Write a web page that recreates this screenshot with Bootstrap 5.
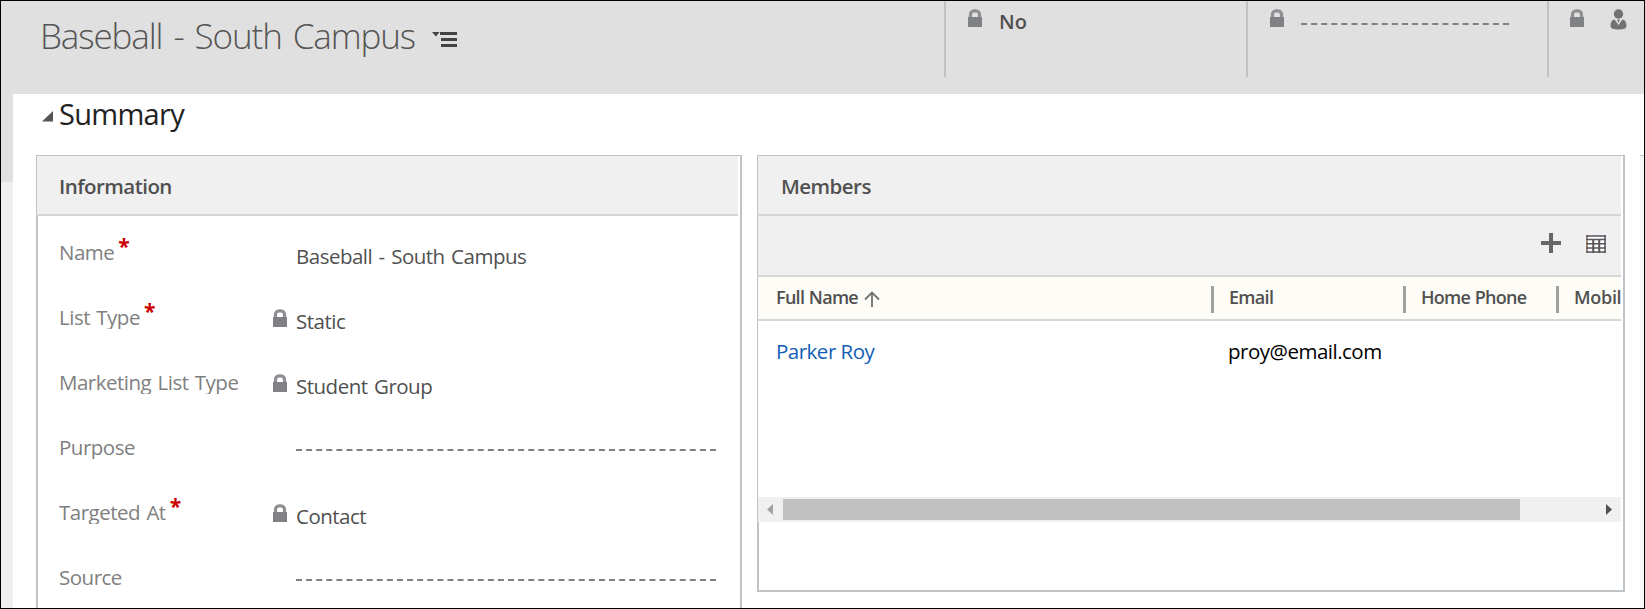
<!DOCTYPE html>
<html lang="en">
<head>
<meta charset="utf-8">
<meta name="viewport" content="width=device-width, initial-scale=1">
<title>Baseball - South Campus</title>
<link href="https://cdn.jsdelivr.net/npm/bootstrap@5.3.0/dist/css/bootstrap.min.css" rel="stylesheet">
<style>
  body { font-family: "Open Sans", "Noto Sans", sans-serif; color: #505050; background: #fff; }
  svg { display: block; flex: none; }
  .app-frame { height: 609px; border: 1px solid #000; }
  .record-bar { height: 93px; background: #e0e0e0; flex: none; }
  .record-title { font-size: 35px; font-weight: 300; line-height: 48px; padding: 11px 0 0 39px; width: 431px; margin: 0; color: #555; letter-spacing: -1.1px; word-spacing: 3px; }
  .menu-icon { margin-top: 31px; }
  .head-cell { width: 302px; height: 76px; border-left: 2px solid #bdc3c7; padding: 8px 0 0 22px; }
  .head-cell.mid { width: 301px; }
  .head-cell.last { width: 97px; padding-left: 21px; }
  .head-value { font-size: 20px; line-height: 26px; font-weight: 600; margin-left: 17px; }
  .dashes { border-top: 2px dashed #808080; height: 0; }
  .side-rail { width: 12px; background: #f0f0f0; }
  .side-rail div { height: 88px; background: #e0e0e0; }
  .section-head { height: 61px; padding-left: 29px; }
  .section-head h2 { font-size: 29px; line-height: 40px; margin: 0 0 0 6px; font-weight: 400; color: #222; letter-spacing: -.7px; }
  .panels { padding-left: 23px; gap: 15px; }
  .panel { border: 0 solid #bdc3c7; border-right-width: 2px; border-top: 1px solid #bdc3c7; background: #fff; }
  .panel-title { height: 60px; margin-right: 2px; padding: 2px 0 0 22px; border-left: 1px solid #bdc3c7; border-bottom: 2px solid #d6d6d6; background: #f0f0f0; font-size: 20.5px; font-weight: 600; letter-spacing: -.55px; }
  .info { width: 706px; }
  .info-fields { flex: 1; border-left: 2px solid #bdc3c7; padding: 4px 24px 0 21px; }
  .field { height: 65px; font-size: 20.5px; flex: none; }
  .field-label { width: 214px; color: #808080; white-space: nowrap; letter-spacing: -.5px; word-spacing: 1.5px; }
  .field-label span { display: block; height: 27px; line-height: 30px; margin-top: -5px; overflow: hidden; }
  .field-label b { font-size: 21px; line-height: 20px; height: 20px; margin: -6px 0 0 4px; color: #c00; letter-spacing: 0; }
  .field-lock { width: 23px; }
  .field-value { white-space: nowrap; padding-top: 8px; letter-spacing: -.5px; word-spacing: 1.6px; }
  .members { width: 868px; height: 437px; border-bottom-width: 2px; }
  .members .panel-title { padding-left: 23px; }
  .grid-tools { height: 61px; margin-right: 2px; border-left: 1px solid #bdc3c7; border-bottom: 2px solid #d6d6d6; background: #f0f0f0; padding: 17px 15px 0 0; gap: 25px; }
  .grid-head { height: 44px; margin-right: 2px; border-left: 1px solid #bdc3c7; border-bottom: 2px solid #d6d6d6; background: #fdfcf7; overflow: hidden; font-size: 18px; font-weight: 600; white-space: nowrap; letter-spacing: -.7px; word-spacing: .5px; }
  .grid-head .cell { height: 27px; line-height: 23px; padding-left: 15px; border-left: 3px solid #a0a0a0; flex: none; margin-top: 9px; }
  .grid-head .c1 { border-left-width: 0; padding-left: 18px; width: 453px; }
  .grid-head .c2 { width: 192px; }
  .grid-head .c3 { width: 153px; }
  .grid-head .c4 { letter-spacing: -.3px; }
  .grid-row { height: 176px; border-left: 1px solid #bdc3c7; font-size: 20.5px; line-height: 28px; padding: 16px 0 0 18px; letter-spacing: -.5px; }
  .grid-row a { width: 452px; color: #1160b7; text-decoration: none; }
  .scroll-bar { height: 25px; margin-right: 2px; border-left: 1px solid #bdc3c7; background: #f0f0f0; padding: 2px 9px 2px 9px; }
  .scroll-thumb { width: 737px; height: 21px; background: #c1c1c1; margin-left: 10px; }
  .panel-foot { flex: 1; border-left: 2px solid #bdc3c7; }
  .next-panel { width: 4px; border-top: 1px solid #bdc3c7; background: #f7f7f7; }
</style>
</head>
<body>
<svg class="d-none">
  <symbol id="lock" viewBox="0 0 14 18"><path d="M2.500 9V5.500A3.500 3.700 0 0 1 6 1.800h2A3.500 3.700 0 0 1 11.500 5.500V9" fill="none" stroke="#8e8f92" stroke-width="3.200"/><path d="M0 8h14v10H0z" fill="#808185"/></symbol>
</svg>
<div class="app-frame d-flex flex-column overflow-hidden">
  <header class="record-bar d-flex">
    <h1 class="record-title text-nowrap"><span>Baseball - South Campus</span></h1>
    <svg class="menu-icon" width="25" height="16" viewBox="0 0 25 16" fill="#444"><path d="M0 0h7.500L4 4.500zM8 0h17v3H8zM9 6h16v3H9zM9 12h16v3H9z"/></svg>
    <div class="head-cell d-flex ms-auto"><svg width="14" height="18"><use href="#lock"/></svg><span class="head-value">No</span></div>
    <div class="head-cell mid d-flex"><svg width="14" height="18"><use href="#lock"/></svg><div class="dashes" style="width:208px;margin:14px 0 0 17px"></div></div>
    <div class="head-cell last d-flex"><svg width="14" height="18"><use href="#lock"/></svg>
      <svg style="margin-left:26px" width="17" height="21" viewBox="0 0 17 21" fill="#727272"><circle cx="8.500" cy="5" r="4.700"/><path d="M4.500 10.500L8.500 16l4-5.500C15.500 11 16.500 14 16.500 17c0 2.500-3 3.500-8 3.500S.5 19.500.5 17c0-3 1-6 4-6.500zM7 10.500h3L8.500 14z"/></svg>
    </div>
  </header>
  <div class="d-flex flex-grow-1">
    <div class="side-rail"><div></div></div>
    <main class="flex-grow-1 d-flex flex-column">
      <div class="section-head d-flex">
        <svg style="margin-top:17px" width="11" height="11" viewBox="0 0 11 11"><path d="M11 0v10.500H0z" fill="#555"/></svg>
        <h2><span>Summary</span></h2>
      </div>
      <div class="panels d-flex flex-grow-1">
        <section class="panel info d-flex flex-column">
          <div class="panel-title d-flex align-items-center"><span>Information</span></div>
          <div class="info-fields">
            <div class="field d-flex align-items-center"><div class="field-label d-flex"><span>Name</span><b>*</b></div><div class="field-lock"></div><div class="field-value"><span>Baseball - South Campus</span></div></div>
            <div class="field d-flex align-items-center"><div class="field-label d-flex"><span>List Type</span><b>*</b></div><div class="field-lock"><svg width="14" height="18"><use href="#lock"/></svg></div><div class="field-value"><span>Static</span></div></div>
            <div class="field d-flex align-items-center"><div class="field-label d-flex"><span>Marketing List Type</span></div><div class="field-lock"><svg width="14" height="18"><use href="#lock"/></svg></div><div class="field-value"><span>Student Group</span></div></div>
            <div class="field d-flex align-items-center"><div class="field-label d-flex"><span>Purpose</span></div><div class="field-lock"></div><div class="dashes flex-grow-1 mt-1"></div></div>
            <div class="field d-flex align-items-center"><div class="field-label d-flex"><span>Targeted At</span><b>*</b></div><div class="field-lock"><svg width="14" height="18"><use href="#lock"/></svg></div><div class="field-value"><span>Contact</span></div></div>
            <div class="field d-flex align-items-center"><div class="field-label d-flex"><span>Source</span></div><div class="field-lock"></div><div class="dashes flex-grow-1 mt-1"></div></div>
          </div>
        </section>
        <section class="panel members d-flex flex-column">
          <div class="panel-title d-flex align-items-center"><span>Members</span></div>
          <div class="grid-tools d-flex justify-content-end">
            <svg width="20" height="20" viewBox="0 0 20 20"><path d="M8 0h4v8h8v4h-8v8H8v-8H0V8h8z" fill="#666"/></svg>
            <svg style="margin-top:2px" width="20" height="18" viewBox="0 0 20 18"><path d="M1 1h18v16H1z" fill="#fff"/><path d="M1 0v18M7 4v14M13 4v14" stroke="#a58a72" stroke-width="2"/><path d="M19 0v18M7.500 4v14M13.500 4v14" stroke="#55585f" stroke-width="1.500"/><path d="M0 1h20M0 4.500h20M0 8.800h20M0 13h20M0 17h20" stroke="#55565c" stroke-width="1.500"/></svg>
          </div>
          <div class="grid-head d-flex">
            <div class="cell c1 d-flex"><span>Full Name</span><svg style="margin:5px 0 0 6px" width="16" height="16" viewBox="0 0 16 16"><path d="M8 1v15M1 8.500L8 1.500l7 7" fill="none" stroke="#707070" stroke-width="1.800"/></svg></div>
            <div class="cell c2"><span>Email</span></div>
            <div class="cell c3"><span>Home Phone</span></div>
            <div class="cell c4"><span>Mobile</span></div>
          </div>
          <div class="grid-row d-flex"><a href="#"><span>Parker Roy</span></a><span class="text-black">proy@email.com</span></div>
          <div class="scroll-bar d-flex align-items-center">
            <svg width="6" height="11" viewBox="0 0 6 11"><path d="M6 0v11L0 5.500z" fill="#a3a3a3"/></svg>
            <div class="scroll-thumb"></div>
            <svg class="ms-auto" width="6" height="11" viewBox="0 0 6 11"><path d="M0 0v11l6-5.500z" fill="#505050"/></svg>
          </div>
          <div class="panel-foot"></div>
        </section>
        <div class="next-panel"></div>
      </div>
    </main>
  </div>
</div>
<script src="https://cdn.jsdelivr.net/npm/bootstrap@5.3.0/dist/js/bootstrap.bundle.min.js"></script>
</body>
</html>
